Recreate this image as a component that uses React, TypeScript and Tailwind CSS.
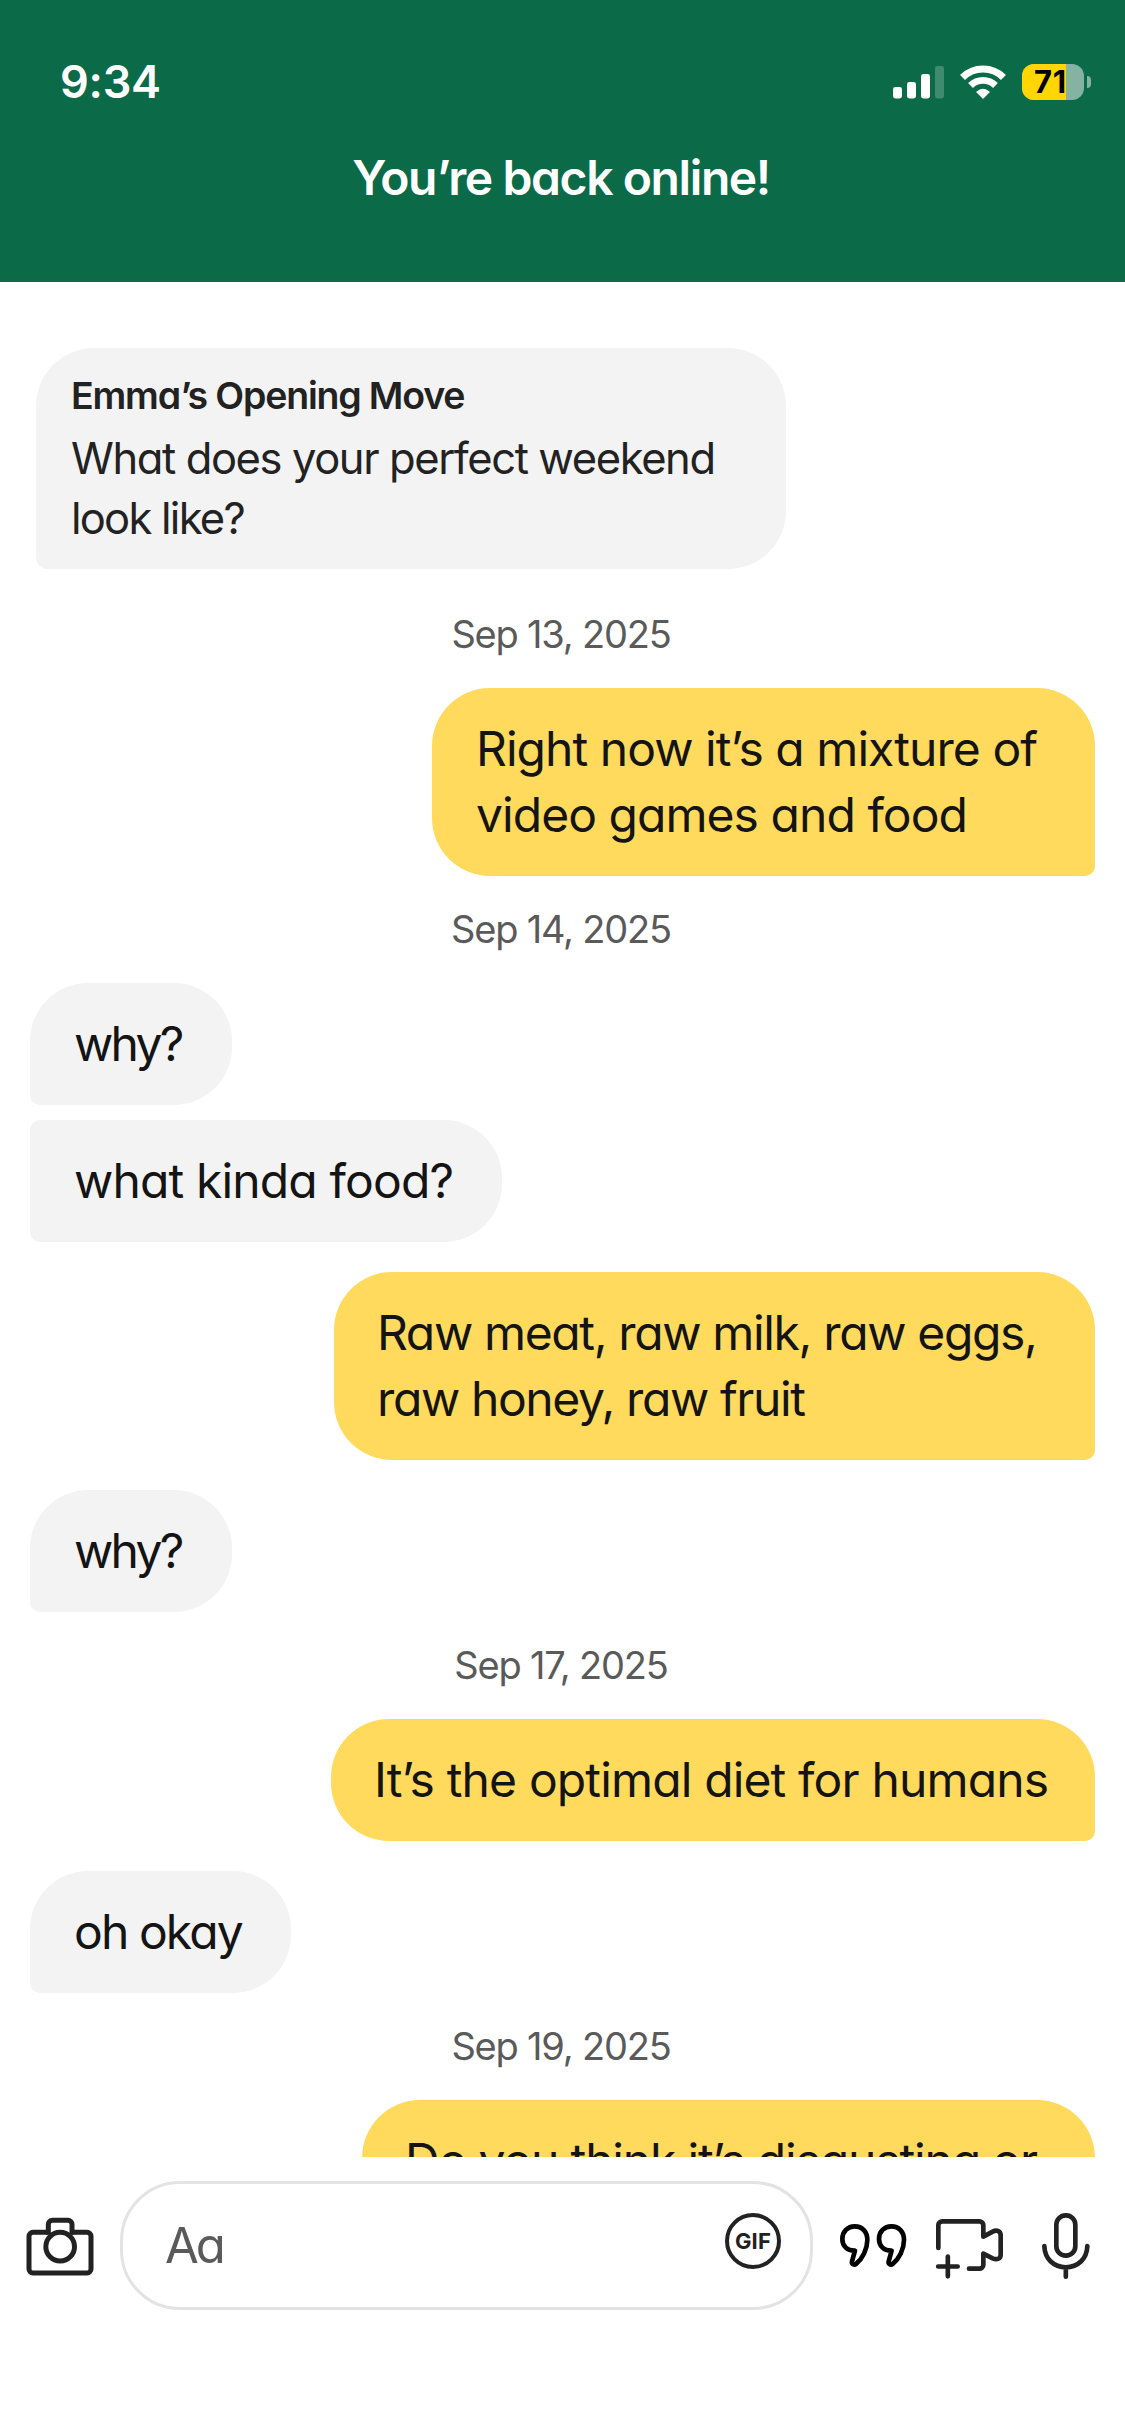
import type { ReactNode } from "react";

type Line = { text: string; track: string };

function StatusBar() {
  return (
    <div className="flex h-[54px] items-start justify-between pl-[60px] pr-[34px]">
      <span className="text-[45px] font-semibold leading-[54px] tracking-[-0.25px]">9:34</span>
      <div className="flex items-start pt-[9px]">
        <svg className="mt-[2px] h-[33px] w-[51px]" viewBox="0 0 51 33" fill="#fff">
          <rect x="0" y="21" width="9" height="11.5" rx="2.4" />
          <rect x="14" y="16" width="9" height="16.5" rx="2.4" />
          <rect x="28" y="8" width="9" height="24.5" rx="2.4" />
          <rect x="42" y="0" width="9" height="32.5" rx="2.4" opacity="0.22" />
        </svg>
        <svg className="ml-[16px] mt-[1px] h-[34px] w-[46px]" viewBox="300 73 138 102" fill="none" stroke="#fff">
          <path d="M307.500 110.500 A87 87 0 0 1 430.500 110.500" strokeWidth="21.500" />
          <path d="M331.500 134.500 A53 53 0 0 1 406.500 134.500" strokeWidth="20.500" />
          <path d="M369 172 L351 154 Q369 138 387 154 Z" fill="#fff" strokeWidth="4" strokeLinejoin="round" />
        </svg>
        <div className="ml-[16px] flex items-center">
          <div className="h-[36px] w-[62px] overflow-hidden rounded-[12px] bg-[#85b3a3]">
            <div className="h-[36px] w-[44px] overflow-hidden bg-[#ffd600] pl-[12px] text-[31px] font-bold leading-[36px] tracking-[0.6px] text-black">
              71
            </div>
          </div>
          <div className="ml-[3px] h-[12px] w-[4px] rounded-r-full bg-[#85b3a3]" />
        </div>
      </div>
    </div>
  );
}

function DateLabel({ children, className = "" }: { children: ReactNode; className?: string }) {
  return (
    <div className={`mb-[31px] pr-[3px] text-center text-[38px] leading-[46px] tracking-[-1.2px] text-[#5a5a5a] ${className}`}>
      {children}
    </div>
  );
}

function Bubble({ mine = false, shape, lines }: { mine?: boolean; shape: string; lines: Line[] }) {
  return (
    <div
      className={`py-[28px] text-[48px] leading-[66px] text-[#141414] ${
        mine ? "mr-[30px] self-end bg-[#ffda5c]" : "ml-[30px] self-start bg-[#f3f3f3] pl-[44px]"
      } ${shape}`}
    >
      {lines.map((l) => (
        <div key={l.text} className={`whitespace-nowrap ${l.track}`}>
          {l.text}
        </div>
      ))}
    </div>
  );
}

function Composer() {
  return (
    <div className="flex h-[279px] items-start bg-white">
      <svg className="ml-[26px] mt-[60px] h-[59px] w-[68px]" viewBox="78 169 204 177" fill="none" stroke="#222" strokeWidth="15">
        <path d="M145 215 H99 a12 12 0 0 0 -12 12 V325 a12 12 0 0 0 12 12 H261 a12 12 0 0 0 12 -12 V227 a12 12 0 0 0 -12 -12 H216" />
        <path d="M145 222 V191 a12 12 0 0 1 12 -12 H204 a12 12 0 0 1 12 12 V222" />
        <circle cx="180.500" cy="258" r="43" />
      </svg>
      <div className="ml-[26px] mt-[24px] flex h-[129px] w-[693px] items-start justify-between rounded-[60px] border-[3px] border-[#e3e3e3] pl-[42px] pr-[29px]">
        <span className="mt-[29px] text-[49px] leading-[66px] tracking-[-3px] text-[#5a5a5a]">Aa</span>
        <div className="mt-[29px] flex h-[56px] w-[56px] items-center justify-center rounded-full border-[4px] border-[#222] text-[22px] font-bold leading-none tracking-[0.2px] text-[#222]">
          GIF
        </div>
      </div>
      <svg className="ml-[26px] mt-[66px] h-[45px] w-[68px]" viewBox="417 189 204 135" fill="none" stroke="#000" strokeWidth="14" strokeLinejoin="round">
        <path d="M465 272 C442 273 427 258 427 237 C427 215 443 199 464 199 C487 199 502 215 502 240 C502 268 487 296 469 311 C462 317 454 312 456 304 Z" />
        <path d="M575 272 C552 273 537 258 537 237 C537 215 553 199 574 199 C597 199 612 215 612 240 C612 268 597 296 579 311 C572 317 564 312 566 304 Z" />
      </svg>
      <svg className="ml-[28px] mt-[61px] h-[61px] w-[69px]" viewBox="705 174 207 183" fill="none" stroke="#222" strokeWidth="14" strokeLinecap="round" strokeLinejoin="round">
        <path d="M715 264 V196 a12 12 0 0 1 12 -12 H838 a12 12 0 0 1 12 12 V230 L878 215 C891 208 902 214 902 226 V284 C902 296 891 301 878 295 L850 281 V314 a12 12 0 0 1 -12 12 H807" />
        <path d="M714.500 319.500 H773 M743.500 290 V349" />
      </svg>
      <svg className="ml-[37px] mt-[55px] h-[68px] w-[50px]" viewBox="1020 156 150 204" fill="none" stroke="#222" strokeWidth="14" strokeLinecap="round">
        <rect x="1066" y="166" width="57" height="121" rx="28" />
        <path d="M1030 258 C1031 297 1059 322 1094.500 322 C1130 322 1158 297 1159 258 M1094.500 322 V350" />
      </svg>
    </div>
  );
}

export default function App() {
  return (
    <div className="flex h-[2436px] w-[1125px] flex-col overflow-hidden bg-white font-['Inter','Liberation_Sans',sans-serif] [font-feature-settings:'cv11']">
      <header className="flex h-[282px] flex-col bg-[#0b6a47] pt-[55px] text-white">
        <StatusBar />
        <div className="mt-[36px] pr-[3px] text-center text-[48px] font-semibold leading-[66px] tracking-[-1.4px]">
          You’re back online!
        </div>
      </header>

      <main className="flex h-[1875px] flex-col overflow-hidden pt-[66px]">
        <div className="ml-[36px] h-[221px] w-[750px] shrink-0 rounded-[58px] rounded-bl-[12px] bg-[#f3f3f3] pl-[35px] pt-[25px] text-[#222]">
          <div className="text-[37.5px] font-semibold leading-[46px] tracking-[-1.18px]">Emma’s Opening Move</div>
          <div className="mt-[9px] whitespace-nowrap text-[43.5px] leading-[60px] tracking-[-1.4px]">
            What does your perfect weekend
          </div>
          <div className="whitespace-nowrap text-[43.5px] leading-[60px] tracking-[-1.75px]">look like?</div>
        </div>

        <DateLabel className="mt-[41px] pt-px">Sep 13, 2025</DateLabel>
        <Bubble
          mine
          shape="w-[663px] rounded-[58px] rounded-br-[10px] pl-[44px]"
          lines={[
            { text: "Right now it’s a mixture of", track: "tracking-[-0.95px]" },
            { text: "video games and food", track: "tracking-[-0.95px]" },
          ]}
        />
        <DateLabel className="mt-[30px]">Sep 14, 2025</DateLabel>
        <Bubble
          shape="w-[202px] rounded-[58px] rounded-bl-[10px]"
          lines={[{ text: "why?", track: "tracking-[-2.7px]" }]}
        />
        <div className="h-[15px] shrink-0" />
        <Bubble
          shape="w-[472px] rounded-[58px] rounded-l-[10px]"
          lines={[{ text: "what kinda food?", track: "tracking-[-0.85px]" }]}
        />
        <div className="h-[30px] shrink-0" />
        <Bubble
          mine
          shape="w-[761px] rounded-[58px] rounded-br-[10px] pl-[43px]"
          lines={[
            { text: "Raw meat, raw milk, raw eggs,", track: "tracking-[-1.35px]" },
            { text: "raw honey, raw fruit", track: "tracking-[-1.38px]" },
          ]}
        />
        <div className="h-[30px] shrink-0" />
        <Bubble
          shape="w-[202px] rounded-[58px] rounded-bl-[10px]"
          lines={[{ text: "why?", track: "tracking-[-2.7px]" }]}
        />
        <DateLabel className="mt-[30px]">Sep 17, 2025</DateLabel>
        <Bubble
          mine
          shape="w-[764px] rounded-[58px] rounded-br-[10px] pl-[43px]"
          lines={[{ text: "It’s the optimal diet for humans", track: "tracking-[-0.85px]" }]}
        />
        <div className="h-[30px] shrink-0" />
        <Bubble
          shape="w-[261px] rounded-[58px] rounded-bl-[10px]"
          lines={[{ text: "oh okay", track: "tracking-[-1.9px]" }]}
        />
        <DateLabel className="mt-[30px]">Sep 19, 2025</DateLabel>
        <Bubble
          mine
          shape="w-[733px] rounded-[58px] rounded-br-[10px] pl-[43px]"
          lines={[{ text: "Do you think it’s disgusting or", track: "tracking-[-1.15px]" }]}
        />
      </main>

      <Composer />
    </div>
  );
}
